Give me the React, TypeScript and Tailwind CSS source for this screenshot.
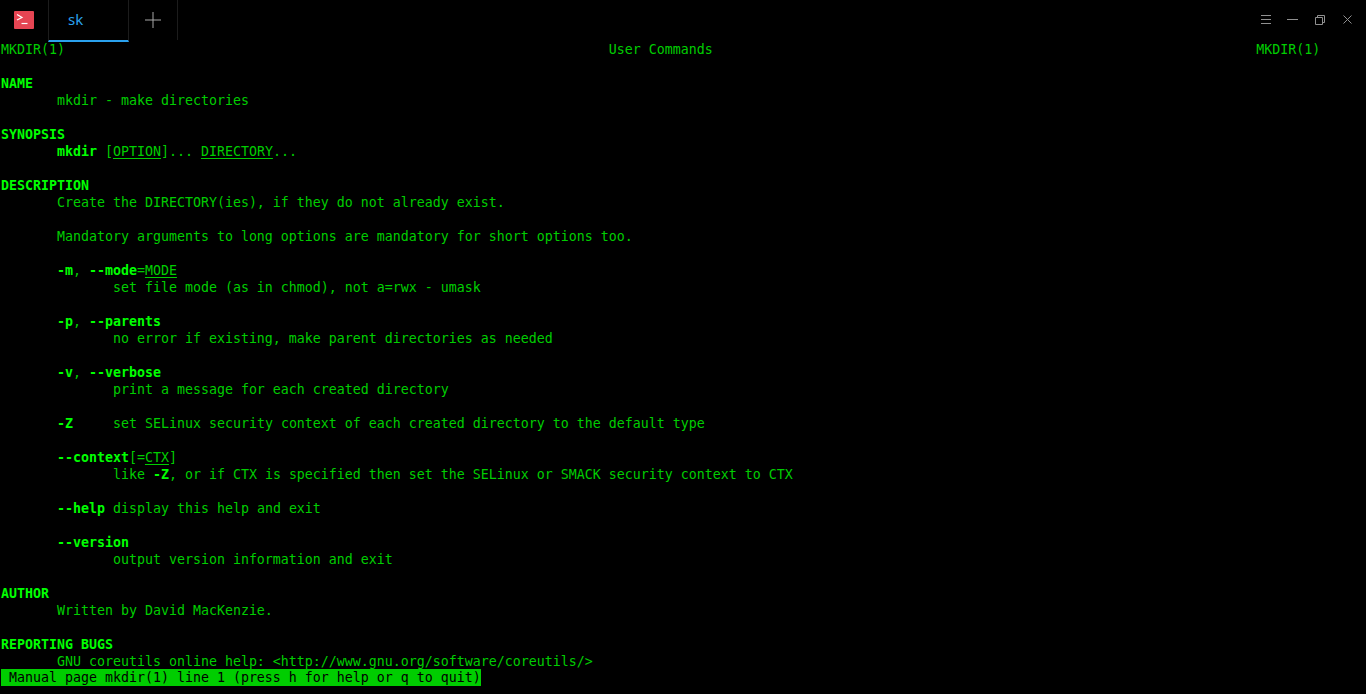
const B = ({ children }: { children: React.ReactNode }) => (
  <span className="font-bold text-[#00ff00]">{children}</span>
);
const U = ({ children }: { children: React.ReactNode }) => <span className="underline underline-offset-2">{children}</span>;

const rows: React.ReactNode[] = [
  "MKDIR(1)                                                                    User Commands                                                                    MKDIR(1)",
  "",
  <B>NAME</B>,
  "       mkdir - make directories",
  "",
  <B>SYNOPSIS</B>,
  <>       <B>mkdir</B> [<U>OPTION</U>]... <U>DIRECTORY</U>...</>,
  "",
  <B>DESCRIPTION</B>,
  "       Create the DIRECTORY(ies), if they do not already exist.",
  "",
  "       Mandatory arguments to long options are mandatory for short options too.",
  "",
  <>       <B>-m</B>, <B>--mode</B>=<U>MODE</U></>,
  "              set file mode (as in chmod), not a=rwx - umask",
  "",
  <>       <B>-p</B>, <B>--parents</B></>,
  "              no error if existing, make parent directories as needed",
  "",
  <>       <B>-v</B>, <B>--verbose</B></>,
  "              print a message for each created directory",
  "",
  <>       <B>-Z</B>     set SELinux security context of each created directory to the default type</>,
  "",
  <>       <B>--context</B>[=<U>CTX</U>]</>,
  <>              like <B>-Z</B>, or if CTX is specified then set the SELinux or SMACK security context to CTX</>,
  "",
  <>       <B>--help</B> display this help and exit</>,
  "",
  <>       <B>--version</B></>,
  "              output version information and exit",
  "",
  <B>AUTHOR</B>,
  "       Written by David MacKenzie.",
  "",
  <B>REPORTING BUGS</B>,
  "       GNU coreutils online help: <http://www.gnu.org/software/coreutils/>",
];

export default function App() {
  return (
    <div className="flex h-[694px] w-[1366px] flex-col overflow-hidden bg-black font-['DejaVu_Sans_Mono',monospace]">
      <header className="flex h-10 shrink-0 items-start">
        <div className="flex h-10 w-12 items-center justify-center">
          <svg width="20" height="18" viewBox="0 0 20 18">
            <rect width="20" height="18" rx="1" fill="#e64553" />
            <path d="M3 3.5 L8 6.5 L3 9" fill="none" stroke="#fff" strokeWidth="1.2" />
            <path d="M7.5 12.5 H13.5" stroke="#fff" strokeWidth="1.2" />
          </svg>
        </div>
        <div className="flex h-[42px] w-[81px] items-center border-x border-b-2 border-x-[#1c1c1c] border-b-[#2aa1ee] pl-[19px] text-[15px] text-[#2aa1ee] font-['Noto_Sans',sans-serif]">
          <span className="-mt-0.5">sk</span>
        </div>
        <div className="flex h-10 w-[49px] items-center justify-center border-r border-[#1c1c1c]">
          <svg width="16" height="16" viewBox="0 0 16 16">
            <path d="M8 0 V16 M0 8 H16" stroke="#a8a8a8" strokeWidth="1" />
          </svg>
        </div>
        <div className="ml-auto flex h-10 items-center pr-[14px] pb-px">
          <svg width="10" height="9" viewBox="0 0 10 9" className="mr-[16px]">
            <path d="M0 0.5 H10 M0 4.5 H10 M0 8.5 H10" stroke="#909090" />
          </svg>
          <svg width="11" height="9" viewBox="0 0 11 9" className="mr-[17px]">
            <path d="M0 4.5 H11" stroke="#909090" />
          </svg>
          <svg width="10" height="10" viewBox="0 0 10 10" className="mr-[18px]">
            <path d="M0.5 2.5 H7.5 V9.5 H0.5 Z M2.5 2.5 V0.5 H9.5 V7.5 H7.5" fill="none" stroke="#909090" />
          </svg>
          <svg width="9" height="9" viewBox="0 0 9 9">
            <path d="M0.5 0.5 L8.5 8.5 M8.5 0.5 L0.5 8.5" stroke="#909090" />
          </svg>
        </div>
      </header>
      <main className="pl-px text-[13.298px] leading-[17px] text-[#00cd00] whitespace-pre">
        {rows.map((row, i) => (
          <div key={i} className="h-[17px] pt-px">
            {row}
          </div>
        ))}
        <div className="h-[17px] w-fit bg-[#00cd00] text-black">{" Manual page mkdir(1) line 1 (press h for help or q to quit)"}</div>
      </main>
    </div>
  );
}
